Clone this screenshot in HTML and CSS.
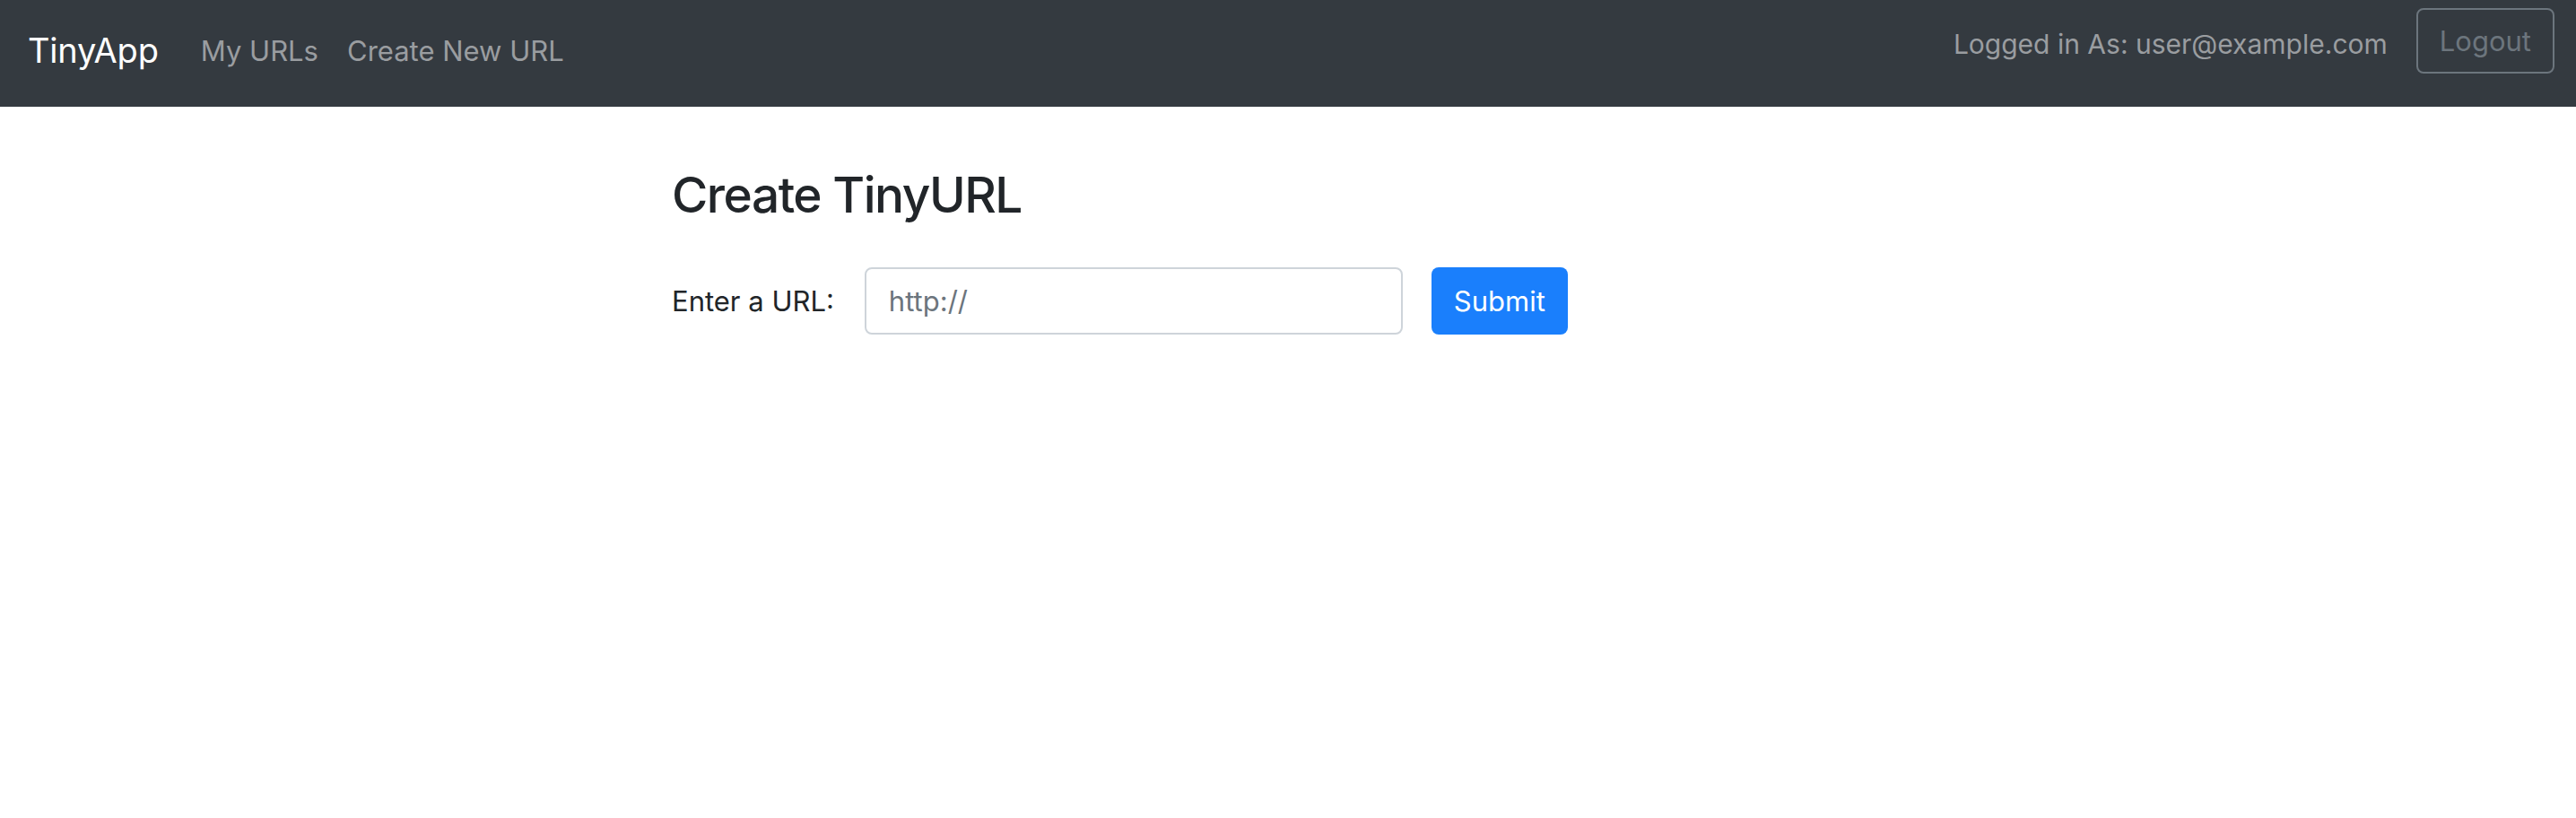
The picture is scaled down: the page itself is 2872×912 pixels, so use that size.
FILE: index.html
```html
<!DOCTYPE html>
<html lang="en">
<head>
<meta charset="utf-8">
<title>TinyApp</title>
<link rel="stylesheet" href="styles.css">
</head>
<body>
<nav class="navbar">
  <a class="brand" href="#">TinyApp</a>
  <div class="nav-links">
    <a class="nav-link" href="#">My URLs</a>
    <a class="nav-link" href="#">Create New URL</a>
  </div>
  <div class="nav-right">
    <span class="logged">Logged in As: user@example.com</span>
    <button class="btn-logout" type="button">Logout</button>
  </div>
</nav>
<main class="container">
  <h1 class="title">Create TinyURL</h1>
  <form class="url-form">
    <label class="label" for="longURL">Enter a URL:</label>
    <input class="url-input" id="longURL" type="text" placeholder="http://">
    <button class="btn-submit" type="submit">Submit</button>
  </form>
</main>
</body>
</html>
```

FILE: styles.css
```css
* { box-sizing: border-box; }
html, body { margin: 0; padding: 0; background: #fff; }
body { font-family: Inter, "Noto Sans", sans-serif; color: #212529; }

.navbar {
  display: flex;
  align-items: flex-start;
  height: 119px;
  background: #343a40;
  padding: 0 24px 0 31px;
}
.brand {
  color: #fff;
  text-decoration: none;
  font-size: 38px;
  line-height: 46px;
  margin-top: 33px;
  letter-spacing: -0.2px;
}
.nav-links {
  display: flex;
  margin-left: 47px;
  margin-top: 38px;
  gap: 32px;
}
.nav-link {
  color: #9a9da0;
  text-decoration: none;
  font-size: 31px;
  line-height: 37px;
}
.nav-right {
  margin-left: auto;
  display: flex;
  align-items: flex-start;
  gap: 32px;
}
.logged {
  color: #9a9da0;
  font-size: 30px;
  line-height: 37px;
  margin-top: 31px;
}
.btn-logout {
  margin-top: 9px;
  height: 73px;
  padding: 0 24px;
  background: transparent;
  border: 2px solid #6c757d;
  border-radius: 8px;
  color: #6c757d;
  font-family: inherit;
  font-size: 31px;
}

.container {
  max-width: 1374px;
  margin: 0 auto;
  padding-top: 64px;
}
.title {
  margin: 0;
  font-size: 55px;
  font-weight: 500;
  line-height: 68px;
  letter-spacing: -1.5px;
  color: #212529;
}
.url-form {
  display: flex;
  align-items: center;
  margin-top: 47px;
}
.label {
  font-size: 31px;
  color: #212529;
  margin-right: 34px;
}
.url-input {
  width: 600px;
  height: 75px;
  border: 2px solid #ced4da;
  border-radius: 8px;
  padding: 0 25px;
  font-family: inherit;
  font-size: 31px;
  color: #495057;
}
.url-input::placeholder { color: #6c757d; }
.btn-submit {
  margin-left: 32px;
  height: 75px;
  padding: 0 25px;
  background: #1a7ffc;
  border: 0;
  border-radius: 8px;
  color: #fff;
  font-family: inherit;
  font-size: 31px;
}
```
